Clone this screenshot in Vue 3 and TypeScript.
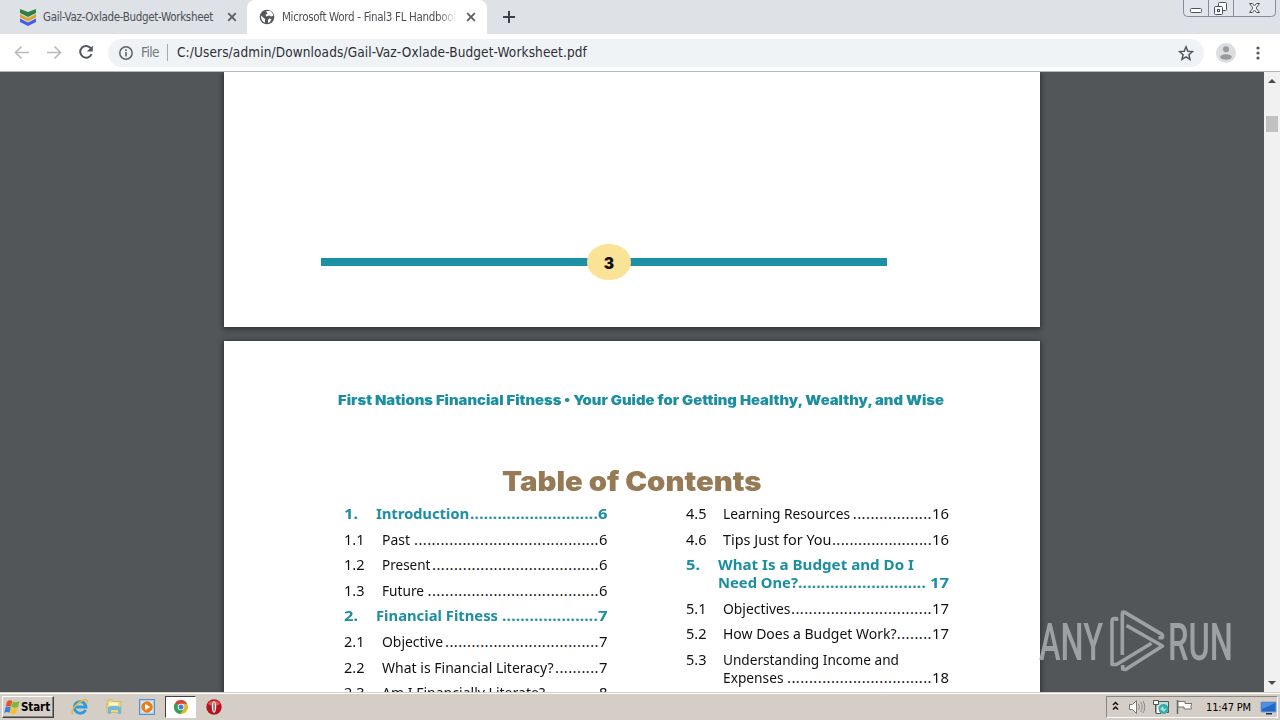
<script setup lang="ts">
interface Entry {
  num: string
  lines: { text: string; width: number }[]
  lead: number
  page: string
  head?: boolean
}

const left: Entry[] = [
  { num: '1.', lines: [{ text: 'Introduction', width: 93 }], lead: 128, page: '6', head: true },
  { num: '1.1', lines: [{ text: 'Past', width: 28 }], lead: 185, page: '6' },
  { num: '1.2', lines: [{ text: 'Present', width: 48.5 }], lead: 167, page: '6' },
  { num: '1.3', lines: [{ text: 'Future', width: 42 }], lead: 171.5, page: '6' },
  { num: '2.', lines: [{ text: 'Financial Fitness', width: 122 }], lead: 96, page: '7', head: true },
  { num: '2.1', lines: [{ text: 'Objective', width: 61 }], lead: 154, page: '7' },
  { num: '2.2', lines: [{ text: 'What is Financial Literacy?', width: 171.5 }], lead: 44, page: '7' },
  { num: '2.3', lines: [{ text: 'Am I Financially Literate?', width: 163 }], lead: 48.4, page: '8' },
]

const right: Entry[] = [
  { num: '4.5', lines: [{ text: 'Learning Resources', width: 127 }], lead: 79.2, page: '16' },
  { num: '4.6', lines: [{ text: 'Tips Just for You', width: 108.5 }], lead: 100, page: '16' },
  { num: '5.', lines: [{ text: 'What Is a Budget and Do I', width: 196 }, { text: 'Need One?', width: 80 }], lead: 128, page: '17', head: true },
  { num: '5.1', lines: [{ text: 'Objectives', width: 67.5 }], lead: 141, page: '17' },
  { num: '5.2', lines: [{ text: 'How Does a Budget Work?', width: 173.5 }], lead: 35.2, page: '17' },
  { num: '5.3', lines: [{ text: 'Understanding Income and', width: 176 }, { text: 'Expenses', width: 60.5 }], lead: 145, page: '18' },
]

const columns = [left, right]

const dots = (e: Entry) => '.'.repeat(Math.round(e.lead / (e.head ? 4.58 : 4.4)))
const pageWidth = (e: Entry) => (e.page.length > 1 ? (e.head ? 19 : 17) : e.head ? 9.5 : 8.5)

// Makes a run of text fill exactly the given width, by tracking or by stretching its letters.
const vFit = {
  mounted(el: HTMLElement, binding: { value: number; modifiers: Record<string, boolean> }) {
    const natural = el.getBoundingClientRect().width
    if (binding.modifiers.stretch) {
      el.style.transform = `scaleX(${binding.value / natural})`
    } else {
      const n = (el.textContent ?? '').length
      el.style.letterSpacing = (binding.value - natural) / Math.max(1, n) + 'px'
    }
    el.style.width = binding.value + 'px'
  },
}
</script>

<template>
  <div class="screen">
    <header class="tabs">
      <div class="tab first">
        <svg class="fav" width="18" height="18" viewBox="0 0 18 18">
          <path d="M1 1l8 3 8-3v4l-8 4-8-4z" fill="#2f8048" />
          <path d="M1 6l8 4 8-4v3.500l-8 4-8-4z" fill="#dba72c" />
          <path d="M1 10.500l8 4 8-4V14l-8 4-8-4z" fill="#4659ee" />
        </svg>
        <span v-fit="170" class="run">Gail-Vaz-Oxlade-Budget-Worksheet</span>
        <svg class="x" width="10" height="10" viewBox="0 0 10 10"><path d="M1.200 1.200l7.600 7.600M8.800 1.200L1.200 8.800" /></svg>
      </div>
      <div class="tab active">
        <svg class="globe" width="16" height="16" viewBox="0 0 16 16">
          <circle cx="8" cy="8" r="7.300" fill="#54585c" />
          <path d="M2 6.500l4 3.500v3.700C3.500 13 1.800 10.500 2 6.500zM7 2.200l4-.4c2 1 3.200 3 3.300 5L12 7.500 10 6.500 7.500 7.500 6.500 6l2-1.500zM10 9.500l2.500.5-1.500 3-2 1V11z" fill="#fff" />
        </svg>
        <div class="clip"><span v-fit="177" class="run">Microsoft Word - Final3 FL Handbook</span></div>
        <svg class="x" width="10" height="10" viewBox="0 0 10 10"><path d="M1.200 1.200l7.600 7.600M8.800 1.200L1.200 8.800" /></svg>
      </div>
      <svg class="plus" width="12" height="12" viewBox="0 0 12 12"><path d="M6 0v12M0 6h12" stroke="#3c4047" stroke-width="2" /></svg>
      <svg class="winctl" width="94" height="17" viewBox="0 0 94 17">
        <path d="M.5 0v12.500q0 4 4 4h84q4 0 4-4V0M25.500 0v16M50.500 0v16" fill="#e2e5ea" stroke="#858b98" />
        <g fill="#fff" stroke="#4c5160">
          <rect x="7.500" y="8.500" width="11" height="4" rx="1" />
          <rect x="35.500" y="2.500" width="8" height="8" rx="1" />
          <rect x="31.500" y="6.500" width="8" height="8" rx="1" />
          <rect x="34.500" y="9.500" width="2" height="2" />
          <path d="M66.500 3.500h3l2 2.500 2-2.500h3l-3.500 4.500 3.500 4.500h-3l-2-2.500-2 2.500h-3L70 8z" />
        </g>
      </svg>
    </header>

    <div class="toolbar">
      <svg class="nav" width="112" height="38" viewBox="0 0 112 38" fill="none">
        <path d="M29 18.500H16M21.500 12.500l-6 6 6 6M47 18.500H60M54.500 12.500l6 6-6 6" stroke="#b9bbbe" stroke-width="1.700" />
        <path d="M91 14.500A5.900 5.900 0 1 0 91.600 20" stroke="#54585d" stroke-width="2" />
        <path d="M92.800 11.500v6h-6z" fill="#54585d" />
      </svg>
      <div class="omni">
        <svg width="14" height="14" viewBox="0 0 14 14" fill="none"><circle cx="7" cy="7" r="6.200" stroke="#5f6368" stroke-width="1.500" /><path d="M7 6v4.600M7 3.200v1.700" stroke="#5f6368" stroke-width="1.600" /></svg>
        <span v-fit="18" class="run file">File</span>
        <i class="bar"></i>
        <span v-fit="410" class="run url">C:/Users/admin/Downloads/Gail-Vaz-Oxlade-Budget-Worksheet.pdf</span>
        <svg class="star" width="16" height="16" viewBox="0 0 16 16"><path d="M8 1.800l1.800 4.400 4.700.4-3.600 3.100 1.100 4.600L8 11.800l-4 2.500 1.100-4.600L1.500 6.600l4.700-.4z" fill="none" stroke="#54585d" stroke-width="1.500" /></svg>
      </div>
      <svg class="user" width="20" height="20" viewBox="0 0 20 20"><circle cx="10" cy="10" r="10" fill="#dcdddf" /><circle cx="10" cy="6.200" r="3" fill="#989a9d" /><ellipse cx="10" cy="14" rx="5.800" ry="2.800" fill="#989a9d" /></svg>
      <svg class="menu" width="4" height="14" viewBox="0 0 4 14" fill="#54585d"><circle cx="2" cy="2" r="1.600" /><circle cx="2" cy="7" r="1.600" /><circle cx="2" cy="12" r="1.600" /></svg>
    </div>

    <main class="viewer">
      <div class="canvas">
        <section class="page prev">
          <div class="rule"><span class="badge">3</span></div>
        </section>
        <section class="page">
          <div class="running"><span v-fit.stretch="606" class="run">First Nations Financial Fitness • Your Guide for Getting Healthy, Wealthy, and Wise</span></div>
          <h1><span v-fit.stretch="259.500" class="run">Table of Contents</span></h1>
          <div class="toc">
            <div v-for="(col, c) in columns" :key="c" class="col">
              <div v-for="e in col" :key="e.num" class="entry" :class="{ head: e.head }">
                <span class="num"><span v-fit.stretch="e.head ? 14 : 20.500" class="run">{{ e.num }}</span></span>
                <div class="body">
                  <div v-for="(l, i) in e.lines" :key="l.text" class="line">
                    <span v-fit.stretch="l.width" class="run">{{ l.text }}</span>
                    <template v-if="i === e.lines.length - 1">
                      <span class="lead"><span v-fit="e.lead" class="run">{{ dots(e) }}</span></span>
                      <span v-fit.stretch="pageWidth(e)" class="run pg" :class="{ apart: e.head && e.page.length > 1 }">{{ e.page }}</span>
                    </template>
                  </div>
                </div>
              </div>
            </div>
          </div>
        </section>
      </div>
      <div class="scroll">
        <svg width="16" height="16" viewBox="0 0 16 16"><path d="M4 11l4-4 4 4z" fill="#4a4a4a" /></svg>
        <div class="thumb"></div>
        <svg class="down" width="16" height="16" viewBox="0 0 16 16"><path d="M4 5h8l-4 4z" fill="#4a4a4a" /></svg>
      </div>
      <svg class="mark" width="200" height="72" viewBox="0 0 200 72">
        <g fill="#a9acae" font-family="Roboto, sans-serif" font-size="52" font-weight="500">
          <text x="3" y="55.500" textLength="64" lengthAdjust="spacingAndGlyphs">ANY</text>
          <text x="132" y="55.500" textLength="65" lengthAdjust="spacingAndGlyphs">RUN</text>
        </g>
        <g fill="none" stroke="#a9acae" stroke-width="3.600" stroke-linejoin="round">
          <path d="M80.500 17v-2.500h-2q-2.500 0-2.500 3V60.500h4.500l35-21.300" />
          <path d="M86.300 51V10q0-3 2.500-1.600l36.700 21.700q2 1.800.5 3.700h-3.500" />
          <path d="M90.500 21.500l36 20.500-37 23.500-2.800-.5v-4" />
        </g>
      </svg>
    </main>

    <footer class="taskbar">
      <div class="start">
        <svg width="16" height="16" viewBox="0 0 16 16">
          <path d="M3 2.500q2.500-2 5.300-.5L7 7.600q-2.500-1.500-5.200.2z" fill="#e5532c" />
          <path d="M8.800 2.500q3.200 1.500 6.700-.5l-1.500 6q-3 1.700-6.500-.2z" fill="#7db733" />
          <path d="M1.600 8.400q2.500-1.700 5.200-.2l-1.300 5.600Q3 12.300.2 14z" fill="#3c7fd6" />
          <path d="M7.400 8.500q3.200 1.700 6.400.1l-1.400 5.600q-2.800 1.600-6.400 0z" fill="#f6bf2d" />
        </svg>
        <span v-fit="29" class="run">Start</span>
      </div>
      <svg class="ie" width="18" height="18" viewBox="0 0 18 18" fill="none">
        <path d="M14.500 11.800A5.800 5.800 0 1 1 15 9H5" stroke="#2d9be0" stroke-width="2.800" />
        <path d="M2 16C-1 14 4 6 11 2.700c4-1.800 6-1 5.300 2" stroke="#e6ba31" stroke-width="1.500" />
      </svg>
      <svg class="folder" width="16" height="16" viewBox="0 0 16 16">
        <path d="M1 1.500l5-1 1 2h8v11H1z" fill="#f0d670" stroke="#c6a954" stroke-width=".6" />
        <path d="M3 3.500h9v3H3z" fill="#fff8d8" /><path d="M2 8q6-2 13 0v7h-3v-4H5v4H2z" fill="#70b8e4" />
      </svg>
      <svg class="wmp" width="16" height="16" viewBox="0 0 16 16">
        <rect x=".5" y=".5" width="15" height="15" fill="#a9d1f1" stroke="#5791c8" /><rect x="2.500" y="2.500" width="11" height="11" fill="#eaf3fb" />
        <circle cx="8" cy="8" r="5.700" fill="#ef7d16" /><path d="M6 4.700l5.300 3.300L6 11.300z" fill="#fff" />
      </svg>
      <div class="current">
        <svg width="14" height="14" viewBox="0 0 14 14">
          <circle cx="7" cy="7" r="7" fill="#e3b72a" />
          <path d="M7 7L1 3.300A7 7 0 0 1 13.100 3.700H7z" fill="#da4435" />
          <path d="M7 7L1 3.300A7 7 0 0 0 6.300 14L9.800 8.700z" fill="#32a058" />
          <circle cx="7" cy="7" r="3.300" fill="#fff" /><circle cx="7" cy="7" r="2.500" fill="#427fe0" />
        </svg>
      </div>
      <svg class="opera" width="16" height="16" viewBox="0 0 16 16"><circle cx="8" cy="8" r="7.700" fill="#b31620" /><path d="M2 5a6.700 6 0 0 1 12 0q-6 4-12 0z" fill="#df5b5c" /><ellipse cx="8" cy="8" rx="2.200" ry="5.800" fill="#fff" /><ellipse cx="8" cy="8" rx=".6" ry="4.900" fill="#8f1119" /></svg>
      <div class="tray">
        <svg width="80" height="20" viewBox="0 0 80 20" fill="none">
          <path d="M1 8L3.500 5.500 6 8M1 12.500L3.500 10 6 12.500" stroke="#111" stroke-width="1.500" />
          <path d="M17.500 7.500h3l4-4v13l-4-4h-3z" fill="#fff" stroke="#777" />
          <path d="M26.500 7q2 3 0 6M28.500 5q3.500 5 0 10M31 4q3.500 6 0 12" stroke="#8a8a8a" />
          <path d="M43.500 4.500h13v11h-13z" fill="#bde0e2" stroke="#555" />
          <path d="M41.500 3.500h5v4h-5zM44 7.500v9h5" fill="#fff" stroke="#555" />
          <circle cx="51.500" cy="12" r="4.900" fill="#35a9a2" /><path d="M48 12l3-3 1 3 3-1-3 4z" fill="#9ce4dc" />
          <path d="M65.500 3v14" stroke="#666" stroke-width="1.500" />
          <path d="M66 4.500h7v2h7q-2 3-.5 5.500H72v-2h-6z" fill="#fff" stroke="#777" />
        </svg>
        <span v-fit="45" class="run clock">11:47 PM</span>
        <svg class="desk" width="17" height="15" viewBox="0 0 17 15"><path d="M1 2h15v10H1z" fill="#2468c7" stroke="#7fa2cf" /><path d="M2 3h13L2 9z" fill="#4f91e2" /><path d="M6 13h6v1.500H6z" fill="#17315c" /></svg>
      </div>
    </footer>
  </div>
</template>

<style>
body { margin: 0; overflow: hidden; }
</style>

<style scoped>
.screen { width: 1280px; height: 720px; display: flex; flex-direction: column; overflow: hidden; font-family: "DejaVu Sans Condensed", "DejaVu Sans", sans-serif; }
.screen svg { flex: none; display: block; }
.run { display: inline-block; white-space: pre; flex: none; transform-origin: 0 50%; }
.tabs { height: 34px; flex: none; background: #dee1e6; display: flex; font-size: 11.500px; font-stretch: condensed; line-height: 34px; color: #4c5055; position: relative; }
.tab { display: flex; align-items: center; box-sizing: border-box; height: 34px; }
.first { width: 247px; padding-left: 19px; }
.first .run { margin-left: 6px; }
.first .x { margin-left: 14px; }
.x path { stroke: #5a5e63; stroke-width: 1.800; fill: none; }
.active { width: 240px; background: #fff; border-radius: 8px 8px 0 0; padding-left: 12px; }
.clip { width: 175px; overflow: hidden; margin-left: 7px; -webkit-mask-image: linear-gradient(to right, #000 155px, transparent 175px); mask-image: linear-gradient(to right, #000 155px, transparent 175px); }
.active .x { margin-left: 9px; }
.plus { margin: 11px 0 0 16px; }
.winctl { margin-left: auto; margin-right: 3px; }
.toolbar { height: 37px; flex: none; background: #fff; border-bottom: 1px solid #b5b7b9; display: flex; align-items: center; box-sizing: content-box; }
.omni { width: 1096px; height: 28px; margin-left: -4px; border-radius: 14px; background: #f0f3f6; display: flex; align-items: center; box-sizing: border-box; padding-left: 11px; font-size: 13.500px; line-height: 16px; font-stretch: condensed; }
.omni .run { margin-top: -2px; }
.file { margin-left: 8px; color: #74787d; }
.bar { width: 1px; height: 17px; background: #a7aaae; margin: 0 9px 0 8px; }
.url { color: #2c2f34; }
.star { margin-left: auto; margin-right: 10px; }
.user { margin-left: 12px; }
.menu { margin-left: 20px; }
.viewer { height: 620px; flex: none; display: flex; position: relative; overflow: hidden; background: #525659; }
.canvas { width: 1264px; height: 620px; overflow: hidden; }
.page { width: 816px; margin-left: 224px; background: #fff; box-shadow: 0 1px 5px 1px rgba(20, 24, 26, .65); height: 500px; }
.prev { height: 255px; margin-bottom: 14px; display: flow-root; }
.rule { width: 566px; height: 8px; margin: 186px 0 0 97px; background: #1d90a3; display: flex; align-items: center; justify-content: center; }
.badge { width: 44px; height: 36px; border-radius: 50%; background: #fae296; display: flex; align-items: center; justify-content: center; margin-left: 10px; flex: none; font: 900 15.500px/36px Inter, "Liberation Sans", sans-serif; padding-top: 3px; box-sizing: border-box; color: #111; }
.running { padding: 49px 0 0 114px; height: 20px; font: 900 13px/20px Inter, "Liberation Sans", sans-serif; color: #1b8fa1; }
h1 { margin: 53px 0 0; padding-left: 278px; height: 36px; font: 900 26.500px/36px Inter, "Liberation Sans", sans-serif; color: #967a55; }
.toc { display: flex; padding: 5px 0 0 120px; font: 14.700px/18px "Noto Sans", "Open Sans", sans-serif; color: #111; }
.col { width: 341.500px; display: flex; flex-direction: column; gap: 7.600px; }
.entry { display: flex; width: 263.500px; }
.num { width: 37.500px; flex: none; }
.body { flex: 1; }
.line { display: flex; height: 18px; }
.lead { margin-left: auto; display: flex; }
.head { font-weight: 700; color: #1b8fa1; }
.head .num { width: 32px; }
.apart { margin-left: 4px; }
.scroll { width: 16px; background: #f1f1f1; display: flex; flex-direction: column; align-items: center; }
.thumb { width: 12px; height: 16px; margin-top: 28px; background: #c1c1c1; }
.down { margin-top: auto; }
.mark { position: absolute; left: 1036px; top: 532px; opacity: .88; }
.taskbar { height: 28px; flex: none; background: #d5cec6; border-top: 1px solid #d5cec6; box-shadow: inset 0 1px #fff; box-sizing: border-box; display: flex; align-items: flex-start; padding: 3px 2px 0; }
.start { width: 52px; height: 22px; box-sizing: border-box; border: 1px solid; border-color: #fff #404040 #404040 #fff; box-shadow: inset -1px -1px #8b8680; display: flex; align-items: center; padding-left: 1px; font: 700 11.500px/20px "DejaVu Sans Condensed", "DejaVu Sans", sans-serif; font-stretch: condensed; color: #000; }
.start .run { margin-left: 1px; }
.ie { margin: 2px 0 0 17px; }
.folder { margin: 3px 0 0 17px; }
.wmp { margin: 3px 0 0 17px; }
.current { width: 31px; height: 22px; box-sizing: border-box; margin-left: 10px; border: 1px solid; border-color: #404040 #fff #fff #404040; background: #fff; display: flex; align-items: center; justify-content: center; }
.opera { margin: 3px 0 0 10px; }
.tray { margin-left: auto; width: 172px; height: 22px; box-sizing: border-box; border: 1px solid; border-color: #8b8680 #fff #fff #8b8680; display: flex; align-items: center; padding-left: 5px; }
.clock { font-size: 11px; font-stretch: condensed; color: #000; margin-left: 14px; }
.desk { margin-left: 9px; }
</style>
